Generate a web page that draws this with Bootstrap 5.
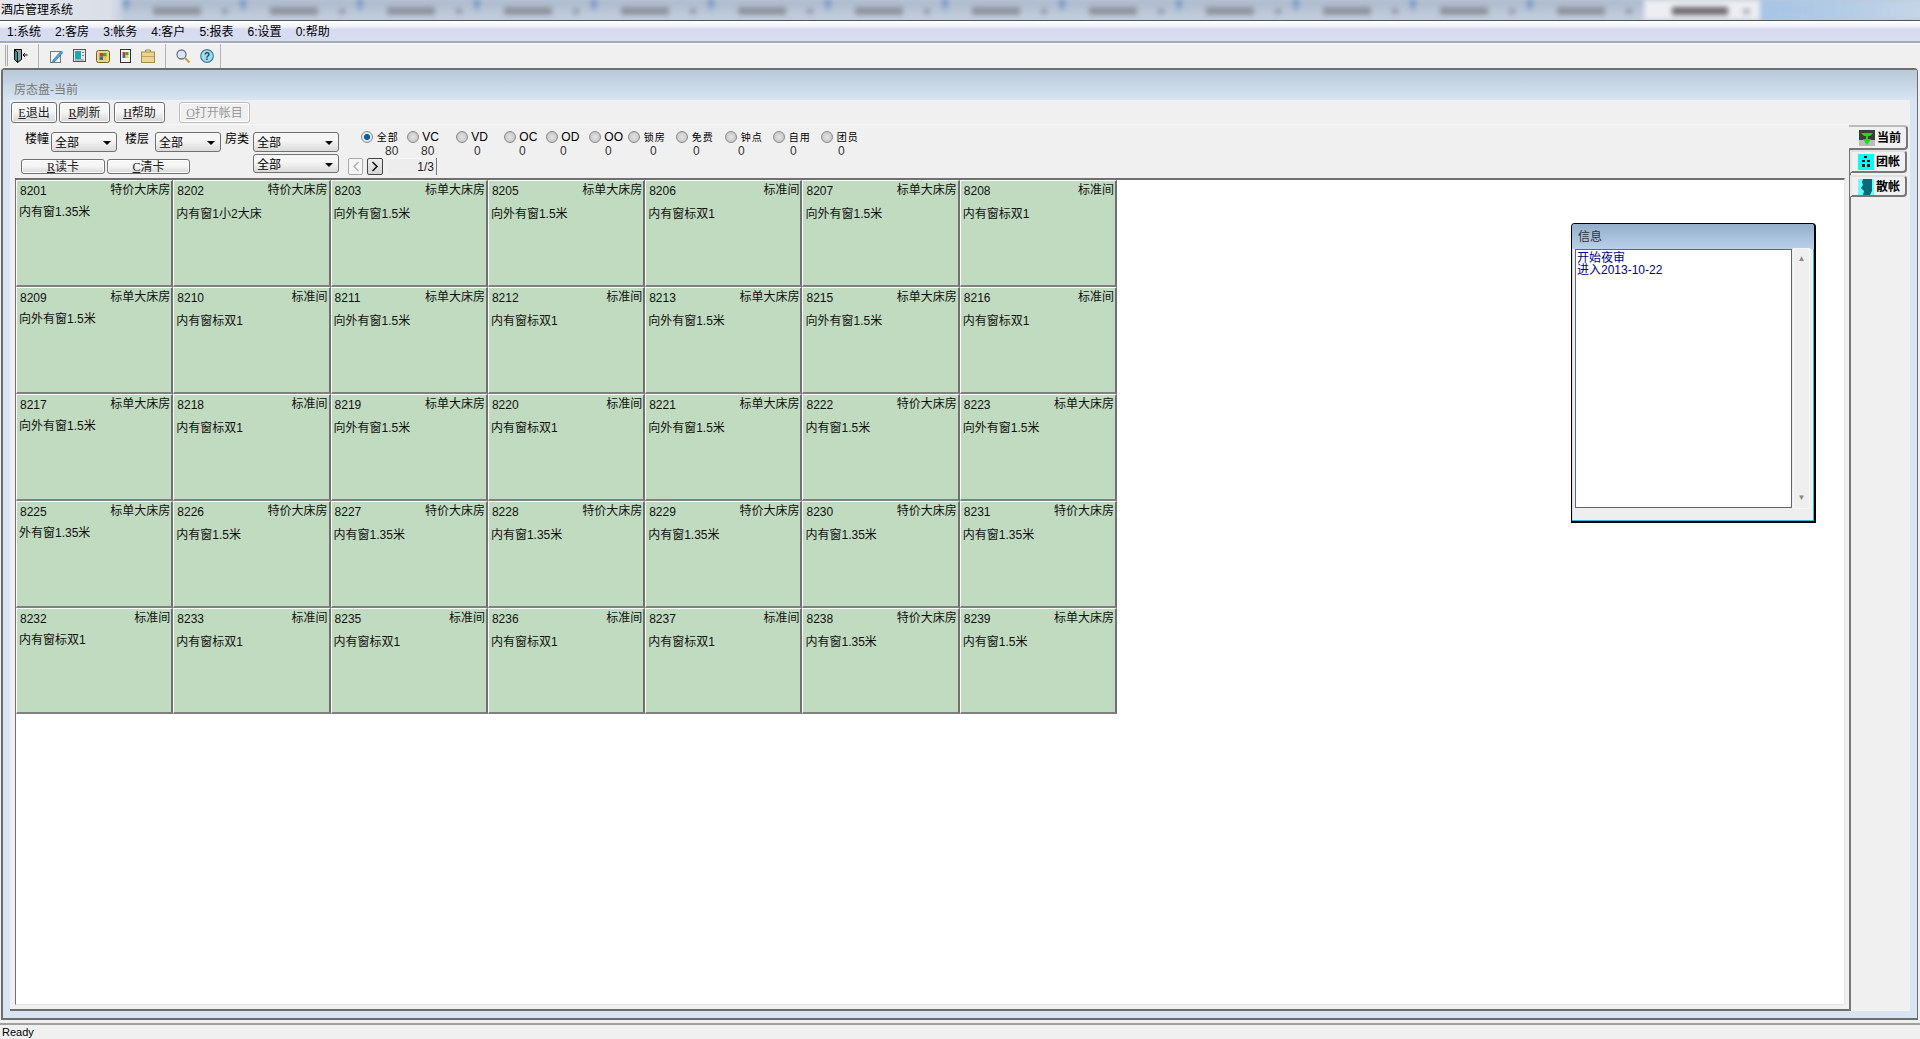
<!DOCTYPE html>
<html lang="zh-CN">
<head>
    <meta charset="UTF-8">
    <title>酒店管理系统</title>
    <link href="https://cdn.jsdelivr.net/npm/bootstrap@5.3.0/dist/css/bootstrap.min.css" rel="stylesheet">
    <style>
        html, body { height: 100%; margin: 0; overflow: hidden; }
        body { font-family: "Liberation Sans", "Noto Sans CJK SC", sans-serif; font-size: 12px; line-height: 1; color: #000; background: #f0f0f0; }
        .app { height: 1039px; width: 1920px; }
        /* title bar, the browser tabs behind it are blurred in the picture */
        .title-strip { height: 20px; position: relative; overflow: hidden; background: linear-gradient(90deg, #e6e9ef, #d9dee7 110px, #bcc8d8 130px); }
        .title-text { position: absolute; left: 1px; top: 4px; font-size: 12px; }
        .blur-row { position: absolute; left: 123px; top: 0; width: 1797px; filter: blur(2.5px); }
        .blur-tab { flex: none; width: 117px; height: 20px; position: relative; background: linear-gradient(#5f85c0, #c0ccdb 70%) left / 6px 100% no-repeat, linear-gradient(#aab8cb, #c6d0de); }
        .blur-tab::before { content: ""; position: absolute; left: 30px; top: 7px; width: 48px; height: 8px; background: #8f949e; }
        .blur-tab::after { content: ""; position: absolute; right: 12px; top: 9px; width: 6px; height: 5px; background: #8f97a4; }
        .blur-active { flex: none; width: 116px; height: 20px; position: relative; background: #eceef2; }
        .blur-active::before { content: ""; position: absolute; left: 28px; top: 7px; width: 56px; height: 8px; background: #6f6a70; }
        .blur-active::after { content: ""; position: absolute; right: 10px; top: 9px; width: 7px; height: 5px; background: #a8abb0; }
        .blur-rest { flex: none; width: 164px; height: 20px; background: linear-gradient(90deg, #a6c4e6, #b3cbe6 50%, #c6d6e8); }
        .menu-strip { height: 22px; border-top: 1px solid #555; border-bottom: 1px solid #a4aacb; background: linear-gradient(#fff, #eef0f9 30%, #d7dbef 40%, #d9ddf0); gap: 14.1px; padding: 5px 0 0 7px; font-size: 12px; }
        .tool-strip { height: 26px; border-top: 1px solid #a6a6a6; box-shadow: inset 0 1px 0 #fff; background: #f0f0f0; padding-left: 5px; gap: 10px; }
        .tool-grip { width: 3px; height: 21px; border-left: 1px solid #aaa; border-right: 1px solid #aaa; }
        .tool-sep { width: 1px; height: 24px; background: #b4b4b4; }
        .tool-door { margin-left: -5px; }
        .tool-pencil { margin-left: 1px; }
        .tool-end { margin-left: -4px; }
        /* mdi frame */
        .mdi-frame { height: 952px; margin: 0 2px 0 1px; background: #d8e4f2; border: 2px solid #6e6e6e; border-right-width: 1px; border-radius: 4px 4px 0 0; padding: 0 7px; }
        .child-title { height: 30px; margin: 0 -7px; padding: 14px 0 0 11px; background: linear-gradient(#b8c9d9, #d8e4f2); color: #777; font-size: 12px; }
        .child-body { height: 911px; background: #f0f0f0; }
        .left-pane { width: 1839px; height: 911px; padding-left: 1px; border-bottom: 2px solid #6e6e6e; }
        .cmd-row { height: 24px; padding-top: 2px; }
        .win-btn { height: 21px; font-size: 12px; color: #222; background: linear-gradient(#f6f6f6 45%, #d6d6d6); border: 1px solid #707070; border-radius: 3px; text-align: center; padding: 0; box-shadow: inset 0 0 0 1px #fff; }
        .win-btn.is-off { color: #999; border-color: #bcbcbc; background: #f0f0f0; }
        .hot-key { font-family: "Liberation Serif", serif; text-decoration: underline; }
        .btn-exit { width: 46px; margin-right: 2px; }
        .btn-refresh { width: 51px; margin-right: 4px; }
        .btn-help { width: 51px; margin-right: 14px; }
        .btn-open { width: 71px; }
        .btn-card { height: 15px; top: 34px; }
        .filter-pane { height: 54px; border-top: 1px solid #fafafa; position: relative; }
        .filter-abs { position: absolute; }
        .filter-label { top: 8px; font-size: 12px; }
        .combo-box { height: 20px; top: 7px; border: 1px solid #707070; border-radius: 3px; background: linear-gradient(#f6f6f6 40%, #dadada); font-size: 12px; padding: 4px 0 0 3px; }
        .combo-low { top: 29px; height: 19px; }
        .combo-box::after { content: ""; position: absolute; right: 5px; top: 8px; border-left: 4px solid transparent; border-right: 4px solid transparent; border-top: 4px solid #000; }
        .radio-dot { display: inline-block; width: 12px; height: 12px; border-radius: 50%; border: 1px solid #8a8a8a; background: radial-gradient(#e4e4e4, #bdbdbd); vertical-align: -2px; }
        .radio-dot.is-on { background: radial-gradient(#0a5f9e 38%, #dde7ef 48%); }
        .radio-item { position: absolute; top: 6px; font-size: 12px; white-space: nowrap; }
        .radio-num { position: absolute; top: 20px; font-size: 12px; color: #333; }
        .radio-small { font-size: 10px; letter-spacing: 1px; }
        .pager-row { left: 337px; top: 33px; gap: 4px; }
        .pager-btn { width: 15px; height: 17px; border: 1px solid #aaa; border-radius: 2px; background: #f6f6f6; }
        .pager-btn.is-next { width: 16px; border-color: #444; background: linear-gradient(#eee, #d4d4d4); }
        .pager-val { height: 17px; width: 49px; margin-left: 1px; border-right: 1px solid #777; background: #ededed; box-shadow: inset 0 1px 0 #f8f8f8; text-align: right; padding: 3px 2px 0 0; color: #222; }
        .room-canvas { height: 827px; width: 1830px; margin-left: 4px; background: #fff; border: 1px solid #e6e6e6; border-left-color: #707070; border-top: 2px solid #707070; position: relative; }
        .room-grid { display: grid; grid-template-columns: repeat(7, 157.3px); grid-auto-rows: 106.9px; width: 1102px; }
        .room-tile { background: #c1dbc0; border-left: 1px solid #fff; border-right: 2px solid #707070; border-bottom: 2px solid #808080; border-top: 1px solid #fff; padding: 3px 1px 0 2px; color: #111; }
        .room-no { padding: 1px 0 0 1px; }
        .room-desc { margin-top: 11px; }
        .room-tile:nth-child(7n+1) .room-desc { margin-top: 9px; }
        .info-win { position: absolute; left: 1555px; top: 43px; width: 245px; height: 300px; border: 1px solid #000; border-right-width: 2px; border-bottom-width: 2px; border-radius: 4px 4px 0 0; background: #eee; box-shadow: inset -1px -1px 0 #35b8e8, inset 1px 0 0 #cfe0f2; }
        .info-title { height: 25px; background: linear-gradient(#94aecb, #b9d0ea); padding: 7px 0 0 6px; font-size: 12px; color: #333; border-radius: 3px 3px 0 0; }
        .info-text { margin-left: 3px; width: 217px; height: 259px; background: #fff; border: 1px solid #666; padding: 2px 1px; color: #00008b; font-size: 12px; line-height: 12px; }
        .info-scroll { width: 15px; height: 259px; margin-left: 2px; color: #888; font-size: 8px; padding: 6px 0; background: #efefef; box-shadow: 0 0 0 1px #f6f6f6; text-align: center; }
        /* account tabs on the right */
        .side-tabs { flex: 1; padding-top: 25px; position: relative; }
        .side-line { position: absolute; left: 0; top: 50px; bottom: 0; width: 2px; background: #777; }
        .side-tab { height: 23px; width: 57px; margin-left: 1px; background: #f0f0f0; border: 2px solid #777; border-left-color: #e8e8e8; border-top-color: #e0e0e0; border-radius: 0 4px 4px 0; font-weight: 700; font-size: 12px; gap: 2px; padding-left: 6px; padding-top: 1px; position: relative; }
        .side-tab.is-current { height: 25px; width: 59px; margin-left: 0; border-left: 0; padding-left: 10px; border-top-color: #bbb; }
        .side-tab.is-last { margin-top: 2px; height: 22px; }
        .status-strip { height: 16px; margin-top: 3px; border-top: 2px solid #a0a0a0; padding: 2px 0 0 2px; font-size: 11px; background: #f0f0f0; }
    </style>
</head>
<body>
<div class="app">
    <div class="title-strip">
        <div class="blur-row d-flex" id="blurRow"></div>
        <div class="title-text">酒店管理系统</div>
    </div>
    <div class="menu-strip d-flex">
        <span>1:系统</span><span>2:客房</span><span>3:帐务</span><span>4:客户</span><span>5:报表</span><span>6:设置</span><span>0:帮助</span>
    </div>
    <div class="tool-strip d-flex align-items-center">
        <span class="tool-grip"></span>
        <svg class="tool-door" width="15" height="16" viewBox="0 0 15 16"><path d="M1.5 1.5h7v10l-4 3v-10l-3-3z" fill="#9a9a9a" stroke="#000"/><path d="M1.5 1.5l3 3v10l-3-3z" fill="#12a6ad" stroke="#000"/><path d="M8.5 1.5v10" stroke="#000"/><path d="M10 7h4.5M12 5l-2 2 2 2" fill="none" stroke="#000"/></svg>
        <span class="tool-sep"></span>
        <svg class="tool-pencil" width="13" height="14" viewBox="0 0 13 14"><rect x=".5" y="2.5" width="10" height="11" fill="#f4f4f4" stroke="#777"/><path d="M3 11l8-9 2 1.500-8 9-3 1z" fill="#4a9fe0" stroke="#2a6a98" stroke-width=".5"/></svg>
        <svg width="13" height="13" viewBox="0 0 13 13"><rect x=".5" y=".5" width="12" height="12" fill="#e8e8e8" stroke="#555"/><rect x="2" y="2" width="6" height="8" fill="#22a7b2"/><path d="M9 3.500h2M9 6.500h2M2 11h9" stroke="#888"/></svg>
        <svg width="14" height="14" viewBox="0 0 14 14"><rect x=".5" y="1.500" width="13" height="12" rx="2" fill="#e9d58f" stroke="#6f5f2a"/><rect x="3.500" y="4" width="3.500" height="3.500" fill="#d33"/><rect x="7" y="4" width="3.500" height="3.500" fill="#3a3"/><rect x="3.500" y="7.500" width="3.500" height="3.500" fill="#36c"/><rect x="7" y="7.500" width="3.500" height="3.500" fill="#ec3"/></svg>
        <svg width="11" height="14" viewBox="0 0 11 14"><rect x=".5" y=".5" width="10" height="13" fill="#f8f8f8" stroke="#333"/><rect x="2.500" y="3" width="3" height="3" fill="#d33"/><rect x="5.500" y="3" width="3" height="3" fill="#3a3"/><rect x="2.500" y="6" width="3" height="3" fill="#36c"/><rect x="5.500" y="6" width="3" height="3" fill="#ec3"/></svg>
        <svg width="14" height="14" viewBox="0 0 14 14"><path d="M4.500 3V1h5v2" fill="#f3e6b8" stroke="#9a8444"/><rect x=".5" y="3" width="13" height="10.500" fill="#ecd590" stroke="#a58c4a"/><path d="M1 7.500h12" stroke="#bfa45a"/></svg>
        <span class="tool-sep"></span>
        <svg width="14" height="14" viewBox="0 0 14 14"><circle cx="5.500" cy="5.500" r="4.500" fill="#d6e5f7" stroke="#6f7488" stroke-width="1.300"/><path d="M9 9l4.500 4.500" stroke="#c6a240" stroke-width="2"/></svg>
        <svg width="14" height="14" viewBox="0 0 14 14"><circle cx="7" cy="7" r="6.300" fill="#a4dcee" stroke="#44809f" stroke-width="1.200"/><text x="7" y="10.500" font-size="10" font-weight="700" text-anchor="middle" fill="#14466a">?</text></svg>
        <span class="tool-sep tool-end"></span>
    </div>
    <div class="mdi-frame">
        <div class="child-title">房态盘-当前</div>
        <div class="child-body d-flex">
            <div class="left-pane">
                <div class="cmd-row d-flex">
                    <button class="win-btn btn-exit"><span class="hot-key">E</span>退出</button>
                    <button class="win-btn btn-refresh"><span class="hot-key">R</span>刷新</button>
                    <button class="win-btn btn-help"><span class="hot-key">H</span>帮助</button>
                    <button class="win-btn btn-open is-off"><span class="hot-key">O</span>打开帐目</button>
                </div>
                <div class="filter-pane">
                    <span class="filter-abs filter-label" style="left:14px">楼幢</span>
                    <div class="filter-abs combo-box" style="left:40px;width:66px">全部</div>
                    <span class="filter-abs filter-label" style="left:114px">楼层</span>
                    <div class="filter-abs combo-box" style="left:144px;width:66px">全部</div>
                    <span class="filter-abs filter-label" style="left:214px">房类</span>
                    <div class="filter-abs combo-box" style="left:242px;width:86px">全部</div>
                    <div class="filter-abs combo-box combo-low" style="left:242px;width:86px">全部</div>
                    <button class="filter-abs win-btn btn-card" style="left:10px;width:84px"><span class="hot-key">R</span>读卡</button>
                    <button class="filter-abs win-btn btn-card" style="left:96px;width:83px"><span class="hot-key">C</span>清卡</button>

                    <span class="radio-item radio-small" style="left:350px"><span class="radio-dot is-on"></span> 全部</span><span class="radio-num" style="left:374px">80</span>
                    <span class="radio-item" style="left:396px"><span class="radio-dot"></span> VC</span><span class="radio-num" style="left:410px">80</span>
                    <span class="radio-item" style="left:445px"><span class="radio-dot"></span> VD</span><span class="radio-num" style="left:463px">0</span>
                    <span class="radio-item" style="left:493px"><span class="radio-dot"></span> OC</span><span class="radio-num" style="left:508px">0</span>
                    <span class="radio-item" style="left:535px"><span class="radio-dot"></span> OD</span><span class="radio-num" style="left:549px">0</span>
                    <span class="radio-item" style="left:578px"><span class="radio-dot"></span> OO</span><span class="radio-num" style="left:594px">0</span>
                    <span class="radio-item radio-small" style="left:617px"><span class="radio-dot"></span> 锁房</span><span class="radio-num" style="left:639px">0</span>
                    <span class="radio-item radio-small" style="left:665px"><span class="radio-dot"></span> 免费</span><span class="radio-num" style="left:682px">0</span>
                    <span class="radio-item radio-small" style="left:714px"><span class="radio-dot"></span> 钟点</span><span class="radio-num" style="left:727px">0</span>
                    <span class="radio-item radio-small" style="left:762px"><span class="radio-dot"></span> 自用</span><span class="radio-num" style="left:779px">0</span>
                    <span class="radio-item radio-small" style="left:810px"><span class="radio-dot"></span> 团员</span><span class="radio-num" style="left:827px">0</span>

                    <div class="filter-abs pager-row d-flex">
                        <div class="pager-btn d-flex align-items-center justify-content-center"><svg width="8" height="11" viewBox="0 0 8 11"><path d="M6.500 1L2 5.500l4.500 4.500" fill="none" stroke="#aaa" stroke-width="1.300"/></svg></div>
                        <div class="pager-btn is-next d-flex align-items-center justify-content-center"><svg width="8" height="11" viewBox="0 0 8 11"><path d="M1.500 1L6 5.500 1.500 10" fill="none" stroke="#111" stroke-width="1.500"/></svg></div>
                        <div class="pager-val">1/3</div>
                    </div>
                </div>
                <div class="room-canvas">
                    <div class="room-grid" id="grid"></div>
                    <div class="info-win">
                        <div class="info-title">信息</div>
                        <div class="d-flex">
                            <div class="info-text">开始夜审<br>进入2013-10-22</div>
                            <div class="info-scroll d-flex flex-column justify-content-between"><span>▲</span><span>▼</span></div>
                        </div>
                    </div>
                </div>
            </div>
            <div class="side-tabs">
                <span class="side-line"></span>
                <div class="side-tab is-current d-flex align-items-center">
                    <svg width="16" height="16" viewBox="0 0 16 16"><rect width="16" height="16" fill="#bbb"/><rect width="16" height="10" fill="#3c3c3c"/><path d="M2 3h12l-3 3H9v3h3l-4 6-4-6h3V6H5z" fill="#16e016"/></svg>当前
                </div>
                <div class="side-tab d-flex align-items-center">
                    <svg width="16" height="16" viewBox="0 0 16 16"><rect width="16" height="16" fill="#0ff"/><path d="M6 2h3v2H6zM4 6h3v2H4zM9 6h3v2H9zM4 10h3v3H4zM9 10h3v3H9z" fill="#111"/></svg>团帐
                </div>
                <div class="side-tab is-last d-flex align-items-center">
                    <svg width="16" height="16" viewBox="0 0 16 16"><rect width="16" height="16" fill="#6ff"/><path d="M5 0h9v12l-2 4H5l1-4-3-3 2-3-1-3z" fill="#0a6a78"/></svg>散帐
                </div>
            </div>
        </div>
    </div>
    <div class="status-strip">Ready</div>
</div>
<script src="https://cdn.jsdelivr.net/npm/bootstrap@5.3.0/dist/js/bootstrap.bundle.min.js"></script>
<script>
    document.getElementById("blurRow").innerHTML = '<div class="blur-tab"></div>'.repeat(13) + '<div class="blur-active"></div><div class="blur-rest"></div>';

    const rooms = [
        ["8201","特价大床房","内有窗1.35米"],["8202","特价大床房","内有窗1小2大床"],["8203","标单大床房","向外有窗1.5米"],["8205","标单大床房","向外有窗1.5米"],["8206","标准间","内有窗标双1"],["8207","标单大床房","向外有窗1.5米"],["8208","标准间","内有窗标双1"],
        ["8209","标单大床房","向外有窗1.5米"],["8210","标准间","内有窗标双1"],["8211","标单大床房","向外有窗1.5米"],["8212","标准间","内有窗标双1"],["8213","标单大床房","向外有窗1.5米"],["8215","标单大床房","向外有窗1.5米"],["8216","标准间","内有窗标双1"],
        ["8217","标单大床房","向外有窗1.5米"],["8218","标准间","内有窗标双1"],["8219","标单大床房","向外有窗1.5米"],["8220","标准间","内有窗标双1"],["8221","标单大床房","向外有窗1.5米"],["8222","特价大床房","内有窗1.5米"],["8223","标单大床房","向外有窗1.5米"],
        ["8225","标单大床房","外有窗1.35米"],["8226","特价大床房","内有窗1.5米"],["8227","特价大床房","内有窗1.35米"],["8228","特价大床房","内有窗1.35米"],["8229","特价大床房","内有窗1.35米"],["8230","特价大床房","内有窗1.35米"],["8231","特价大床房","内有窗1.35米"],
        ["8232","标准间","内有窗标双1"],["8233","标准间","内有窗标双1"],["8235","标准间","内有窗标双1"],["8236","标准间","内有窗标双1"],["8237","标准间","内有窗标双1"],["8238","特价大床房","内有窗1.35米"],["8239","标单大床房","内有窗1.5米"]
    ];
    document.getElementById("grid").innerHTML = rooms.map(r =>
        `<div class="room-tile"><div class="d-flex justify-content-between"><span class="room-no">${r[0]}</span><span>${r[1]}</span></div><div class="room-desc">${r[2]}</div></div>`
    ).join("");
</script>
</body>
</html>
